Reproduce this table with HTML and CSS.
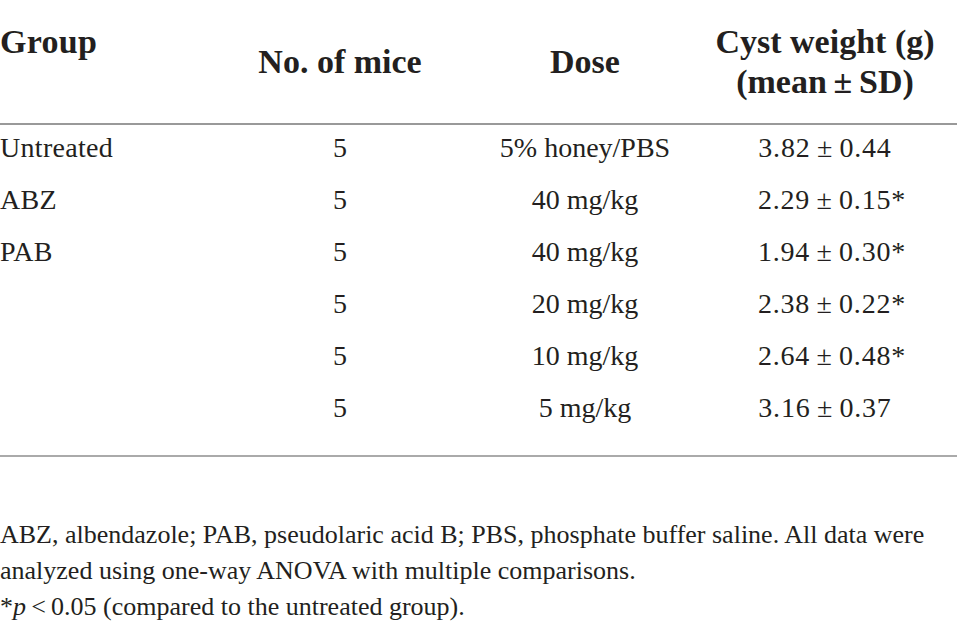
FILE: index.html
```html
<!DOCTYPE html>
<html lang="en">
<head>
  <meta charset="UTF-8">
  <meta name="viewport" content="width=device-width, initial-scale=1.0">
  <title>Cyst weight</title>
  <link rel="stylesheet" href="styles.css">
</head>
<body>
  <div class="table-wrap">
    <table class="data-table">
      <colgroup>
        <col class="col-group">
        <col class="col-mice">
        <col class="col-dose">
        <col class="col-weight">
      </colgroup>
      <thead>
        <tr>
          <th class="left top">Group</th>
          <th>No. of mice</th>
          <th>Dose</th>
          <th>Cyst weight (g)<br>(mean&#8201;±&#8201;SD)</th>
        </tr>
      </thead>
      <tbody>
        <tr>
          <td class="left">Untreated</td>
          <td>5</td>
          <td>5% honey/PBS</td>
          <td class="num">3.82&#8201;±&#8201;0.44</td>
        </tr>
        <tr>
          <td class="left">ABZ</td>
          <td>5</td>
          <td>40 mg/kg</td>
          <td class="num">2.29&#8201;±&#8201;0.15<span class="sig">*</span></td>
        </tr>
        <tr>
          <td class="left">PAB</td>
          <td>5</td>
          <td>40 mg/kg</td>
          <td class="num">1.94&#8201;±&#8201;0.30<span class="sig">*</span></td>
        </tr>
        <tr>
          <td class="left"></td>
          <td>5</td>
          <td>20 mg/kg</td>
          <td class="num">2.38&#8201;±&#8201;0.22<span class="sig">*</span></td>
        </tr>
        <tr>
          <td class="left"></td>
          <td>5</td>
          <td>10 mg/kg</td>
          <td class="num">2.64&#8201;±&#8201;0.48<span class="sig">*</span></td>
        </tr>
        <tr>
          <td class="left"></td>
          <td>5</td>
          <td>5 mg/kg</td>
          <td class="num">3.16&#8201;±&#8201;0.37</td>
        </tr>
      </tbody>
    </table>

    <div class="table-notes">
      <p>ABZ, albendazole; PAB, pseudolaric acid B; PBS, phosphate buffer saline. All data were analyzed using one-way ANOVA with multiple comparisons.</p>
      <p>*<i>p</i>&#8201;&lt;&#8201;0.05 (compared to the untreated group).</p>
    </div>
  </div>
</body>
</html>
```

FILE: styles.css
```css
body {
  margin: 0;
  background-color: #fff;
  color: #231f20;
  font-family: "Liberation Serif", "Times New Roman", serif;
}

.table-wrap {
  width: 957px;
}

.data-table {
  width: 100%;
  border-collapse: collapse;
  table-layout: fixed;
}

.col-group { width: 203px; }
.col-mice { width: 274px; }
.col-dose { width: 216px; }
.col-weight { width: 264px; }

.data-table th {
  font-size: 34px;
  font-weight: bold;
  line-height: 40px;
  text-align: center;
  vertical-align: middle;
  padding: 22px 0 21px;
  border-bottom: 2px solid #999;
}

.data-table th.top {
  vertical-align: top;
}

.data-table td {
  font-size: 28px;
  line-height: 46px;
  text-align: center;
  padding: 0 0 6px;
  white-space: nowrap;
}

.data-table .left {
  text-align: left;
  letter-spacing: 0.3px;
}

.data-table .num {
  letter-spacing: 0.8px;
}

.data-table tbody tr:last-child td {
  padding-bottom: 24px;
  border-bottom: 2px solid #aaa;
}

.sig {
  margin-right: -0.5em;
}

.table-notes {
  margin-top: 60px;
  font-size: 26px;
  line-height: 36px;
}

.table-notes p {
  margin: 0;
}
```
